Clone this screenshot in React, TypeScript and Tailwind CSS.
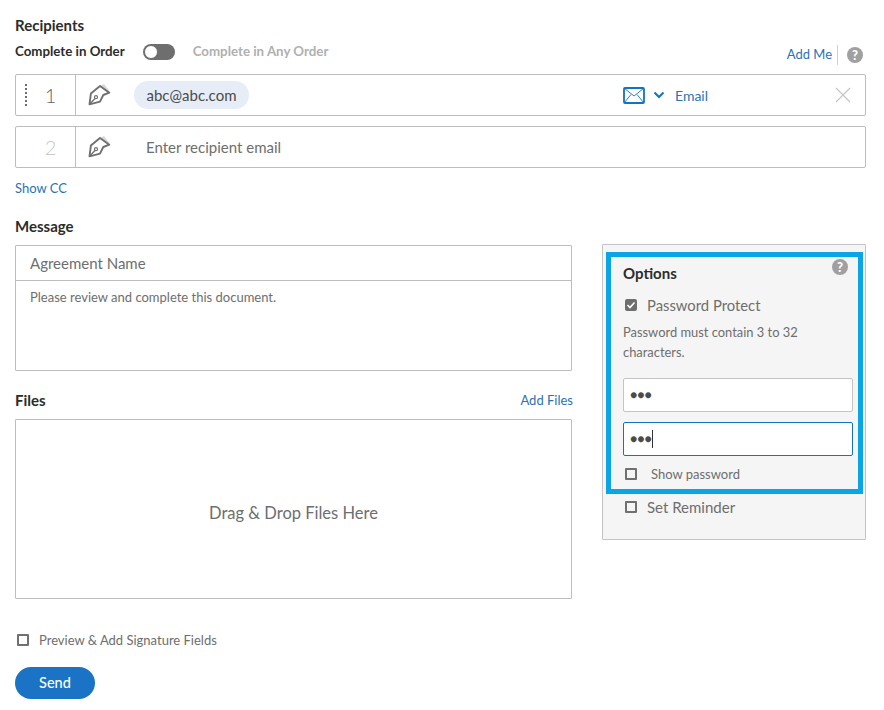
const font = "font-['Lato','Noto_Sans',sans-serif]";

function PenIcon() {
  return (
    <svg width="24" height="24" viewBox="0 0 24 24" className="shrink-0">
      <path d="M12 3 L16 1 L21.5 8 L21.3 9.7 Z" fill="#d8d8d8" />
      <path d="M1.5 21.3 L2.9 10.5 L12 3 L21.3 9.7 L15.3 12 L12 18.7 Z" fill="none" stroke="#707070" strokeWidth="1.9" strokeLinejoin="round" />
      <path d="M1.5 21.3 L7 15.5" stroke="#707070" strokeWidth="1.3" />
      <circle cx="8" cy="14.2" r="1.5" fill="none" stroke="#707070" strokeWidth="1.2" />
    </svg>
  );
}

function HelpDot({ className }: { className?: string }) {
  return (
    <span className={`flex h-4 w-4 items-center justify-center rounded-full bg-[#a0a0a0] text-[13px] font-black leading-none text-white ${className ?? ""}`}>?</span>
  );
}

function Check({ checked, className }: { checked?: boolean; className?: string }) {
  if (checked) {
    return (
      <span className={`flex h-3 w-3 items-center justify-center rounded-[2px] bg-[#6e6e6e] ${className ?? ""}`}>
        <svg width="10" height="10" viewBox="0 0 10 10">
          <path d="M1.5 5 L4 7.5 L8.5 2.5" fill="none" stroke="#fff" strokeWidth="1.6" />
        </svg>
      </span>
    );
  }
  return <span className={`h-3 w-3 rounded-[1px] border-2 border-[#707070] ${className ?? ""}`} />;
}

function RecipientRow({ index, active }: { index: number; active?: boolean }) {
  return (
    <div className="flex h-[42px] items-center rounded-[2px] border border-[#bdbdbd] bg-white">
      <div className="relative flex h-full w-[60px] shrink-0 items-center justify-center border-r border-[#bdbdbd] pl-[10px]">
        {active && <span className="absolute left-[9px] top-[9px] h-[22px] border-l-2 border-dotted border-[#6e6e6e]" />}
        <span className={`text-[20px] font-light ${active ? "text-[#666666]" : "text-[#c8c8c8]"}`}>{index}</span>
      </div>
      <div className="ml-[12px] w-[46px] shrink-0">
        <PenIcon />
      </div>
      {active ? (
        <>
          <span className="flex h-[28px] w-[115px] items-center justify-center rounded-full bg-[#e7edf7] text-[15px] text-[#4b4b4b]">abc@abc.com</span>
          <svg width="22" height="17" viewBox="0 0 22 17" className="ml-[374px]">
            <rect x="1" y="1" width="20" height="15" rx="1" fill="none" stroke="#1473c0" strokeWidth="1.8" />
            <path d="M1.5 1.5 L11 9 L20.5 1.5 M1.5 15.5 L8 7.5 M20.5 15.5 L14 7.5" fill="none" stroke="#1473c0" strokeWidth="0.9" />
          </svg>
          <svg width="12" height="8" viewBox="0 0 12 8" className="ml-[8px]">
            <path d="M1.5 1.5 L6 6 L10.5 1.5" fill="none" stroke="#1473c0" strokeWidth="2" />
          </svg>
          <span className="ml-[10px] text-[14px] text-[#2a72b8]">Email</span>
          <svg width="16" height="16" viewBox="0 0 16 16" className="ml-auto mr-[14px]">
            <path d="M1 1 L15 15 M15 1 L1 15" stroke="#c4c4c4" strokeWidth="1.1" />
          </svg>
        </>
      ) : (
        <span className="ml-[12px] text-[15px] text-[#6e6e6e]">Enter recipient email</span>
      )}
    </div>
  );
}

function OptionsPanel() {
  return (
    <div className="h-[296px] w-[264px] rounded-[1px] border border-[#c4c4c4] bg-[#f5f5f5] pl-[3px] pr-[2px] pt-[7px]">
      <div className="h-[242px] border-[5px] border-[#0aa5e4] pl-[12px] pr-[5px] pt-[6px]">
        <div className="flex items-center justify-between">
          <span className="text-[15px] font-bold leading-[20px] text-[#2c2c2c]">Options</span>
          <HelpDot className="mr-[5px] -mt-[12px]" />
        </div>
        <label className="mt-[12px] flex items-center text-[14.8px] leading-[20px] text-[#6e6e6e]">
          <Check checked className="ml-[2px] mr-[10px]" />
          Password Protect
        </label>
        <p className="mt-[7px] w-[190px] text-[12.9px] leading-[20px] text-[#6e6e6e]">Password must contain 3 to 32 characters.</p>
        <div className="mt-[16px] flex h-[34px] items-center rounded-[2px] border border-[#c4c4c4] bg-white pl-[6px] text-[12px] text-[#4b4b4b]">●●●</div>
        <div className="mt-[10px] flex h-[34px] items-center rounded-[2px] border border-[#1473c0] bg-white pl-[6px] text-[12px] text-[#4b4b4b]">
          ●●●<span className="h-[18px] border-l border-[#333]" />
        </div>
        <label className="mt-[9px] flex items-center text-[13px] leading-[18px] text-[#6e6e6e]">
          <Check className="ml-[2px] mr-[14px]" />
          Show password
        </label>
      </div>
      <label className="mt-[3px] flex items-center pl-[19px] text-[15px] leading-[20px] text-[#6e6e6e]">
        <Check className="mr-[10px]" />
        Set Reminder
      </label>
    </div>
  );
}

export default function App() {
  return (
    <div className={`${font} h-[710px] w-[884px] bg-white pl-[15px] pr-[18px] pt-[15px]`}>
      <h2 className="text-[15px] font-bold leading-[20px] text-[#2c2c2c]">Recipients</h2>
      <div className="mt-[8px] flex h-[18px] items-center">
        <span className="text-[13.3px] font-bold text-[#2c2c2c]">Complete in Order</span>
        <span className="ml-[18px] flex h-4 w-8 items-center rounded-full bg-[#6e6e6e] pl-[1px]">
          <span className="h-[14px] w-[14px] rounded-full border border-[#6e6e6e] bg-white" />
        </span>
        <span className="ml-[18px] text-[13.3px] font-bold text-[#b0b0b0]">Complete in Any Order</span>
        <span className="ml-auto mt-[6px] text-[13px] text-[#2a72b8]">Add Me</span>
        <span className="ml-[5px] mt-[6px] h-[20px] border-l border-[#d0d0d0]" />
        <HelpDot className="ml-[9px] mr-[3px] mt-[6px]" />
      </div>
      <div className="mt-[13px] flex flex-col gap-[10px]">
        <RecipientRow index={1} active />
        <RecipientRow index={2} />
      </div>
      <a className="mt-[12px] block text-[13px] leading-[16px] text-[#2a72b8]">Show CC</a>

      <div className="mt-[20px] flex justify-between">
        <div className="w-[557px]">
          <h2 className="text-[15px] font-bold leading-[20px] text-[#2c2c2c]">Message</h2>
          <div className="mt-[9px] h-[126px] rounded-[1px] border border-[#bdbdbd]">
            <div className="flex h-[35px] items-center border-b border-[#bdbdbd] px-[14px] text-[15px] text-[#6e6e6e]">Agreement Name</div>
            <p className="px-[14px] pt-[7px] text-[13px] leading-[18px] text-[#6e6e6e]">Please review and complete this document.</p>
          </div>
          <div className="mt-[19px] flex h-[20px] items-center justify-between">
            <h2 className="text-[15px] font-bold leading-[20px] text-[#2c2c2c]">Files</h2>
            <span className="-mr-[1px] mt-[2px] text-[13px] text-[#2a72b8]">Add Files</span>
          </div>
          <div className="mt-[9px] flex h-[180px] items-center justify-center rounded-[1px] border border-[#bdbdbd] pt-[8px] text-[16.5px] text-[#6e6e6e]">Drag &amp; Drop Files Here</div>
          <label className="mt-[32px] flex items-center pl-[2px] text-[13px] leading-[18px] text-[#6e6e6e]">
            <Check className="mr-[10px]" />
            Preview &amp; Add Signature Fields
          </label>
          <button className="mt-[18px] h-[32px] w-[80px] rounded-full bg-[#1b73c5] text-[14.5px] font-medium text-white">Send</button>
        </div>
        <div className="mt-[28px]">
          <OptionsPanel />
        </div>
      </div>
    </div>
  );
}
